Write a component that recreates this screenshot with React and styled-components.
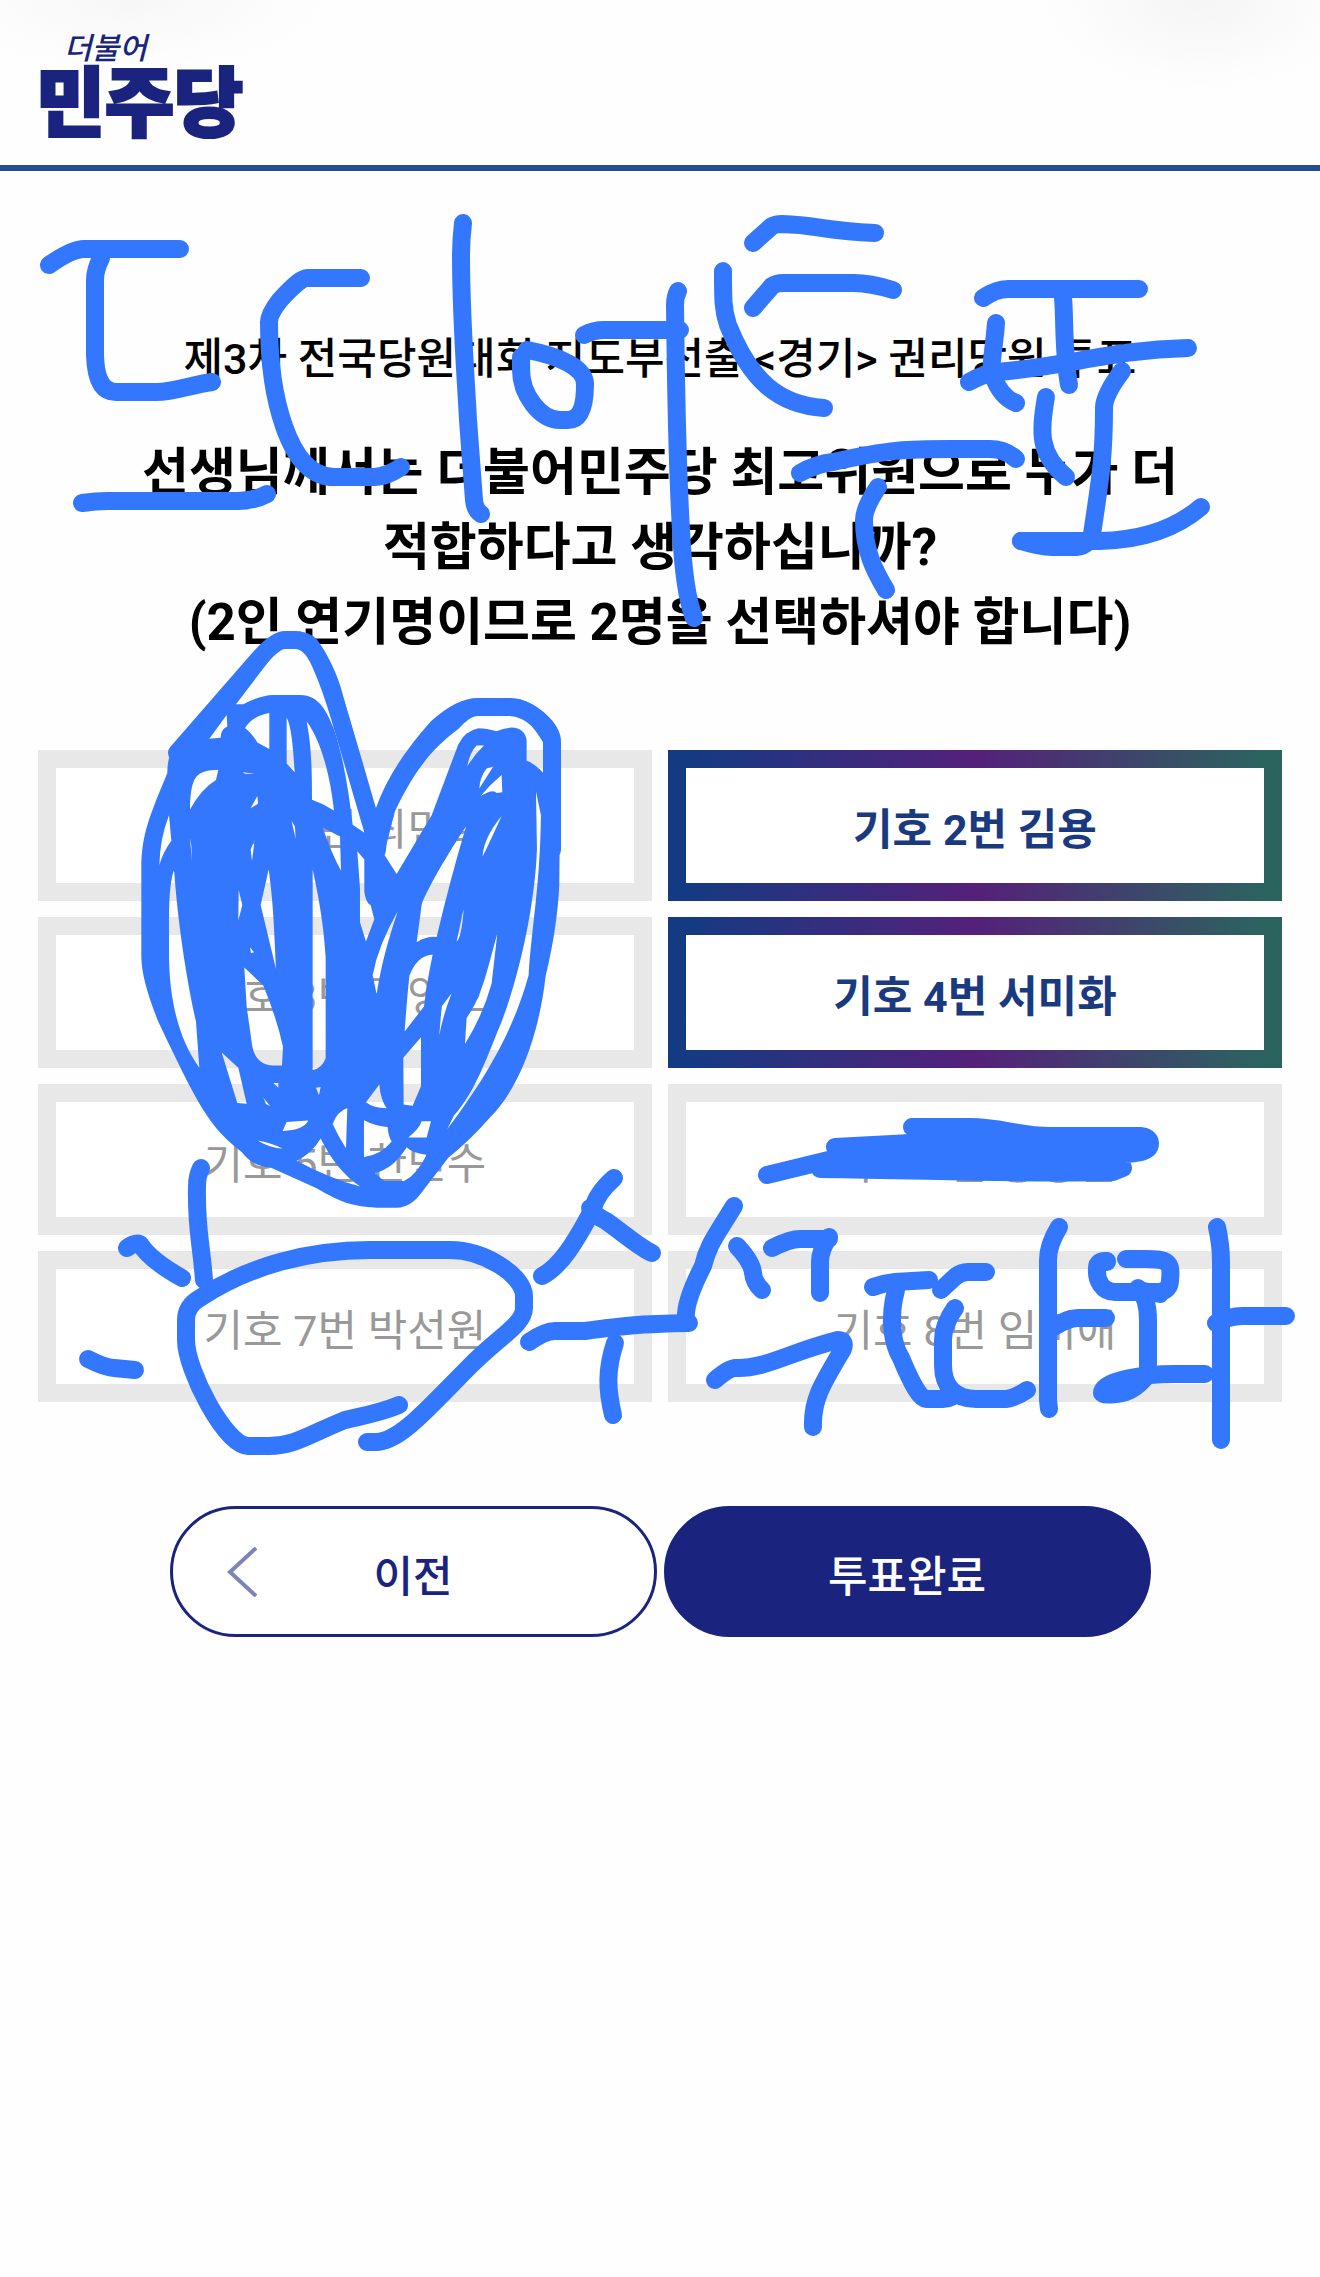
import React from 'react';
import styled, {createGlobalStyle} from 'styled-components';

const GlobalStyle = createGlobalStyle`
  * {
    box-sizing: border-box;
  }

  body {
    margin: 0;
    background-color: #fefefe;
    font-family: Roboto, 'Noto Sans CJK KR', sans-serif;
  }
`

const Page = styled.div`
  position: relative;
  min-height: 100vh;
`

const Header = styled.header`
  display: flex;
  height: 171px;
  padding: 24px 36px 0;
  border-bottom: 6px solid #234d94;
  background:
    radial-gradient(ellipse 200px 70px at 130px 0, #f7f7f7, transparent),
    radial-gradient(ellipse 160px 90px at calc(100% - 120px) 0, #f5f5f5, transparent);
`

const Logo = styled.a`
  display: flex;
  flex-direction: column;
  color: #1a237e;
  font-family: 'Noto Sans CJK KR', sans-serif;
  text-decoration: none;
`

const LogoScript = styled.span`
  padding-left: 28px;
  font-size: 30px;
  font-style: italic;
  font-weight: 500;
  line-height: 44px;
`

const LogoName = styled.span`
  font-size: 75px;
  font-weight: 900;
  line-height: 60px;
  -webkit-text-stroke: 3px #1a237e;
`

const Main = styled.main`
  display: flex;
  flex-direction: column;
  padding: 158px 38px 0;
`

const Subtitle = styled.p`
  margin: 0;
  color: #000;
  font-size: 43px;
  font-weight: 500;
  line-height: 60px;
  text-align: center;
`

const Question = styled.h1`
  margin: 46px 0 90px;
  color: #000;
  font-size: 51px;
  font-weight: 700;
  line-height: 75px;
  text-align: center;
`

const Candidates = styled.div`
  display: grid;
  grid-template-columns: 1fr 1fr;
  gap: 16px;
`

const Candidate = styled.button`
  height: 151px;
  padding: 8px 0 0;
  border: 18px solid #e8e8e8;
  border-image: ${props => props.$selected
    ? 'linear-gradient(to right, #143b82, #55207a 50%, #2b645f) 1'
    : 'none'};
  background-color: #fff;
  color: ${props => props.$selected ? '#1a3a80' : '#999'};
  font-family: inherit;
  font-size: 43px;
  font-weight: ${props => props.$selected ? 700 : 400};
  line-height: 60px;
`

const Actions = styled.div`
  display: flex;
  justify-content: center;
  gap: 7px;
  margin-top: 104px;
`

const ActionButton = styled.button`
  display: grid;
  grid-template-columns: 1fr auto 1fr;
  align-items: center;
  width: 487px;
  height: 131px;
  padding: 0 54px;
  border: 3px solid #1a237e;
  border-radius: 66px;
  background-color: ${props => props.$primary ? '#1a237e' : '#fff'};
  color: ${props => props.$primary ? '#fff' : '#1a237e'};
  font-family: inherit;
  font-size: 43px;
  font-weight: 500;
  line-height: 60px;
`

const ActionText = styled.span`
  grid-column: 2;
  padding-top: 10px;
`

const Doodle = styled.svg`
  position: absolute;
  top: 0;
  left: 0;
  width: 100%;
  pointer-events: none;
`

const candidates = [
  {number: 1, name: '최민희'},
  {number: 2, name: '김용', selected: true},
  {number: 3, name: '김영호'},
  {number: 4, name: '서미화', selected: true},
  {number: 5, name: '한민수'},
  {number: 6, name: '황명선'},
  {number: 7, name: '박선원'},
  {number: 8, name: '임미애'},
];

// pen strokes over the question
const topStrokes = [
  'M49 265 Q72 249 84 249 H180',
  'M101 258 Q95 270 95 280 V355 Q96 392 116 392 H156 C175 392 190 385 212 382',
  'M82 503 Q96 501 108 501 H238 Q254 501 267 494',
  'M361 278 H308 Q302 276 280 300 Q269 314 269 322 C269 395 288 477 334 477 H375 Q388 476 401 467',
  'M463 223 Q461 240 461 255 C461 320 466 380 468 420 L474 500 Q475 510 481 514',
  'M527 350 C560 356 585 368 585 384 C585 408 580 420 568 420 H560 C540 420 521 394 521 370 V357',
  'M584 335 Q594 330 604 330 H680',
  'M678 291 Q675 297 675 305 C676 400 678 480 681 530 Q684 592 694 618',
  'M753 243 L772 226 Q776 224 782 224 C820 225 820 231 875 233',
  'M753 308 L772 286 Q776 283 784 283 H854 Q870 283 893 290',
  'M723 271 C723 300 723 310 728 325 C750 380 778 405 824 408',
  'M800 473 Q816 464 833 462 C890 449 910 449 950 449 H990 Q1005 449 1016 459',
  'M878 487 Q864 508 864 520 C864 550 874 570 886 590',
  'M983 298 Q996 289 1008 289 H1139',
  'M996 323 C994 350 990 365 992 373 Q1000 397 1016 403',
  'M969 382 Q985 373 997 372 C1070 366 1110 350 1188 348',
  'M1063 297 C1065 320 1063 350 1069 385',
  'M1046 397 C1040 430 1038 454 1066 477',
  'M1122 371 Q1104 395 1104 408 C1104 460 1100 480 1091 541',
  'M1021 541 H1100 C1150 540 1180 525 1201 507',
  'M1021 541 Q1040 547 1052 547 H1077 Q1083 547 1089 541',
];

// pen strokes over the candidates
const bottomStrokes = [
  'M201 1168 Q197 1176 197 1186 C196 1230 201 1240 204 1280',
  'M127 1248 Q135 1242 140 1244 Q150 1260 182 1278',
  'M88 1359 Q106 1368 114 1368 L135 1370',
  'M399 1405 C380 1413 362 1416 345 1420 C310 1434 295 1446 269 1446 H248 C225 1445 186 1370 186 1340 V1320 Q186 1306 200 1298 C250 1265 310 1250 370 1250 H450 C485 1250 524 1276 524 1296 V1308 C524 1324 500 1336 470 1366 C430 1406 400 1442 376 1442 H367',
  'M614 1178 Q596 1194 593 1209 C575 1243 560 1267 542 1276',
  'M590 1208 Q592 1214 606 1221 C622 1232 640 1248 652 1253',
  'M529 1342 Q545 1331 555 1331 H585 C615 1327 630 1324 689 1323',
  'M615 1343 C606 1370 607 1390 613 1415',
  'M734 1206 C715 1237 708 1245 703 1266 Q684 1303 686 1320',
  'M737 1246 Q752 1262 753 1273 Q754 1283 762 1290',
  'M772 1248 Q790 1239 800 1239 H829 M829 1237 Q820 1250 820 1262 V1293',
  'M715 1380 Q730 1367 736 1368 C765 1369 790 1352 838 1340 Q846 1340 843 1349 C822 1384 812 1400 813 1427',
  'M873 1287 Q884 1283 895 1282 L929 1280',
  'M896 1290 C888 1320 893 1345 901 1358 Q918 1399 926 1399 H943 Q952 1399 955 1393',
  'M941 1290 L955 1277 Q961 1272 968 1272 H986',
  'M955 1308 Q943 1325 943 1340 V1365 C943 1387 955 1399 976 1399 H1006 Q1015 1398 1027 1390',
  'M1059 1227 Q1048 1245 1048 1260 V1400 L1049 1409',
  'M1054 1327 Q1068 1318 1078 1318 H1106',
  'M1107 1262 V1261 Q1097 1260 1097 1268 C1096 1280 1102 1292 1115 1292 H1160 Q1170 1290 1170 1280 C1172 1262 1168 1259 1145 1259 H1126',
  'M1138 1288 Q1148 1298 1148 1320 V1370',
  'M1138 1290 L1160 1294',
  'M1205 1374 H1175 C1145 1374 1102 1380 1102 1393 Q1104 1396 1122 1393 Q1136 1390 1148 1374',
  'M1110 1390 L1135 1384',
  'M1217 1227 Q1221 1245 1221 1262 V1440',
  'M1216 1323 Q1230 1316 1242 1316 H1286',
];

const bar = 'M912 1127 H970 C1000 1127 1020 1136 1050 1136 H1140 Q1150 1137 1150 1143 C1150 1155 1130 1154 1100 1154 H880 L835 1147 L930 1142 L1140 1146 M767 1175 L845 1156 L1110 1160 L1123 1168 L1113 1172 C1000 1174 930 1170 820 1169 L870 1160 H1110 M912 1127 L930 1140';

// the two petals that stick out of the heart
const petals = [
  'M177 753 L258 660 Q275 640 285 640 H295 Q310 640 320 662 C335 695 342 725 373 830',
  'M377 850 C378 815 395 775 437 728 Q460 707 478 707 H510 C530 708 552 728 552 742 V850',
];

// the scribbled heart: outline first, then every gap left between the strokes
const heart = [
  'M485 29 Q540 29 562 52 C600 100 620 140 632 175 L740 510 C790 410 850 345 920 270 Q985 205 1045 205 H1150 C1210 205 1292 270 1292 320 L1288 690 C1285 760 1270 850 1247 930 C1225 1100 1160 1230 1080 1300 Q1020 1360 955 1405 L880 1490 Q845 1535 800 1536 H740 C660 1530 640 1525 560 1485 L420 1430 Q370 1430 335 1390 C240 1325 210 1280 85 1050 Q34 940 34 880 V650 C34 560 60 510 112 400 C112 350 130 330 165 322 L430 50 Q455 29 485 29 Z',
  'M455 76 Q440 80 410 115 L318 220 L340 220 Q390 197 430 196 H510 C570 197 590 240 612 285 C640 360 655 440 668 535 L702 555 L705 545 L655 380 C625 260 600 150 545 95 Q530 76 515 75 Z',
  'M290 248 L238 310 L272 308 Q272 285 292 278 Z',
  'M418 243 Q370 250 345 282 Q365 295 382 320 L418 337 Z',
  'M470 255 V375 L494 398 C490 340 485 280 470 255 Z',
  'M530 265 C545 330 546 400 546 470 Q580 480 612 498 C600 400 570 310 530 265 Z',
  'M265 391 C200 393 182 405 180 495 Q215 440 258 418 Z',
  'M338 398 L375 402 L345 402 Z',
  'M382 460 L362 492 L384 480 Z',
  'M117 510 Q90 570 88 640 Q100 605 124 577 Z',
  'M131 655 C115 700 117 760 117 870 C117 1000 150 1100 208 1170 L198 1050 C160 900 140 750 133 660 Z',
  'M485 525 L497 572 L495 540 Z',
  'M180 570 L186 632 L184 590 Z',
  'M374 575 L362 600 L366 630 Z',
  'M326 705 L325 785 L337 745 Z',
  'M416 652 L392 745 L438 912 C432 800 430 740 416 652 Z',
  'M578 542 L630 566 L633 655 Q605 610 578 542 Z',
  'M682 604 L703 626 V710 Q708 740 722 745 L733 782 L708 840 L690 790 V700 Z',
  'M360 855 L372 868 L363 870 Z',
  'M343 908 L350 1010 L367 1115 Q378 1162 430 1164 H456 L459 1115 Q440 1040 400 955 Z',
  'M548 652 V1176 Q575 1172 587 1145 V880 C580 780 560 700 548 652 Z',
  'M275 1130 L325 1170 L350 1264 L322 1262 Z',
  'M400 1248 L420 1270 L408 1265 Z',
  'M430 1210 H445 V1222 Z',
  'M558 1222 L572 1220 L567 1242 Z',
  'M470 1312 L535 1308 Q520 1334 458 1335 Z',
  'M383 1360 Q420 1365 458 1381 Q420 1380 383 1360 Z',
  'M500 1413 Q545 1395 572 1355 Q620 1440 690 1480 Q600 1460 500 1413 Z',
  'M652 1275 Q620 1285 608 1317 Q625 1350 648 1380 Z',
  'M702 1307 Q735 1322 773 1325 Q775 1350 785 1363 Q750 1400 702 1403 Z',
  'M708 1260 L748 1214 Q752 1255 770 1276 Q730 1275 708 1260 Z',
  'M735 1445 Q790 1435 830 1378 Q850 1395 890 1397 Q860 1450 822 1466 H762 Z',
  'M875 1310 L903 1310 L890 1352 L835 1352 Q868 1330 875 1310 Z',
  'M820 1144 L873 1090 V1218 L848 1269 L821 1266 Z',
  'M903 875 Q860 880 838 930 Q830 1000 824 1075 L882 1010 Q890 950 908 875 Z',
  'M803 762 Q745 850 728 928 L740 978 C755 900 770 850 803 762 Z',
  'M1102 820 L1085 950 Q1060 1030 1005 1108 L1010 1040 C1060 980 1075 900 1102 820 Z',
  'M965 975 L935 1010 L928 1085 Q940 1030 965 975 Z',
  'M1001 755 L980 840 Q995 830 1001 755 Z',
  'M1008 540 C960 600 880 720 875 745 L860 842 Q890 825 920 828 Q960 680 1008 540 Z',
  'M762 612 L795 500 C850 400 900 340 985 285 Q1020 250 1045 250 H1145 C1190 252 1215 285 1240 320 V400 Q1215 375 1190 368 V315 Q1185 282 1145 281 Q1120 283 1100 291 Q1070 283 1045 283 Q1005 290 985 325 L905 510 L800 664 Z',
  'M1062 328 H1040 Q1020 345 1012 382 Q1035 350 1062 328 Z',
  'M1090 383 L1070 388 Q1050 410 1048 440 Z',
  'M1115 405 Q1080 430 1052 460 Q1090 440 1100 452 L1117 450 Z',
  'M1115 512 Q1060 570 1058 618 Q1085 570 1115 512 Z',
  'M1218 448 L1233 510 C1230 700 1205 800 1196 928 C1160 1040 1100 1160 952 1330 L972 1295 C1040 1230 1080 1120 1110 1060 C1170 930 1215 740 1221 600 Z',
];

const Chevron = () => (
  <svg width="30" height="50" viewBox="0 0 30 50" fill="none" aria-hidden="true">
    <path d="M29 1 L3 25 L29 49" stroke="#7f83b8" strokeWidth="4" />
  </svg>
);

const Scribbles = () => (
  <Doodle viewBox="0 0 1320 2277" aria-hidden="true">
    <g fill="none" stroke="#3377ff" strokeWidth="18" strokeLinecap="round" strokeLinejoin="round">
      {[...topStrokes, ...bottomStrokes, ...petals].map(d => <path key={d} d={d} />)}
      <path d={bar} />
    </g>
    <path
      d={heart.join(' ')}
      fill="#3377ff"
      fillRule="evenodd"
      transform="translate(130 620) scale(0.3333 0.3827)"
    />
  </Doodle>
);

export default class App extends React.Component {
  render() {
    return (
      <Page>
        <GlobalStyle />
        <Header>
          <Logo href="#">
            <LogoScript>더불어</LogoScript>
            <LogoName>민주당</LogoName>
          </Logo>
        </Header>
        <Main>
          <Subtitle>제3차 전국당원대회 지도부선출 &lt;경기&gt; 권리당원 투표</Subtitle>
          <Question>
            선생님께서는 더불어민주당 최고위원으로 누가 더<br />
            적합하다고 생각하십니까?<br />
            (2인 연기명이므로 2명을 선택하셔야 합니다)
          </Question>
          <Candidates>
            {candidates.map(({number, name, selected}) => (
              <Candidate key={number} type="button" $selected={selected} aria-pressed={!!selected}>
                기호 {number}번 {name}
              </Candidate>
            ))}
          </Candidates>
          <Actions>
            <ActionButton type="button">
              <Chevron />
              <ActionText>이전</ActionText>
            </ActionButton>
            <ActionButton type="button" $primary>
              <ActionText>투표완료</ActionText>
            </ActionButton>
          </Actions>
        </Main>
        <Scribbles />
      </Page>
    );
  }
}
